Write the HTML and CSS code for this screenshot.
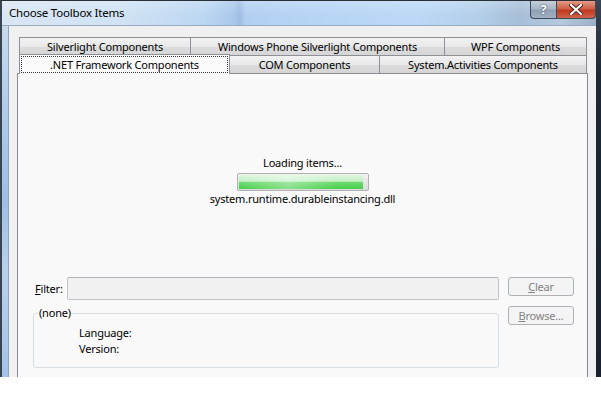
FILE: index.html
```html
<!DOCTYPE html>
<html>
<head>
<meta charset="utf-8">
<link rel="stylesheet" href="styles.css">
</head>
<body>
<div class="shot">
  <div class="dlg">
    <div class="cap">
      <span class="cap-text">Choose Toolbox Items</span>
      <div class="cap-btns">
        <span class="cbtn help">?</span>
        <span class="cbtn closer">
          <svg width="14" height="11" viewBox="0 0 14 11"><path d="M2 1 L12 10 M12 1 L2 10" stroke="#4a1a12" stroke-width="4" stroke-linecap="square"/><path d="M2 1 L12 10 M12 1 L2 10" stroke="#ffffff" stroke-width="2.2" stroke-linecap="square"/></svg>
        </span>
      </div>
    </div>
    <div class="dlg-main">
      <div class="edge-l"></div>
      <div class="client">
        <div class="tabs">
          <div class="tabrow">
            <div class="tab w1">Silverlight Components</div>
            <div class="tab w2">Windows Phone Silverlight Components</div>
            <div class="tab w3">WPF Components</div>
          </div>
          <div class="tabrow">
            <div class="tab selected w4"><span class="focus">.NET Framework Components</span></div>
            <div class="tab w5">COM Components</div>
            <div class="tab w6">System.Activities Components</div>
          </div>
        </div>
        <div class="page">
          <div class="loading">
            <div class="line">Loading items...</div>
            <div class="progress"><div class="fill"></div></div>
            <div class="line">system.runtime.durableinstancing.dll</div>
          </div>
          <div class="lower">
            <div class="leftcol">
              <div class="filter">
                <label class="flabel"><u>F</u>ilter:</label>
                <div class="textbox"></div>
              </div>
              <fieldset class="group">
                <legend>(none)</legend>
                <div class="line info">Language:</div>
                <div class="line info">Version:</div>
              </fieldset>
            </div>
            <div class="rightcol">
              <div class="btn"><u>C</u>lear</div>
              <div class="btn"><u>B</u>rowse...</div>
            </div>
          </div>
        </div>
      </div>
    </div>
  </div>
  <div class="edge-r"></div>
</div>
</body>
</html>
```
FILE: styles.css
```css
* { box-sizing: border-box; }
html, body { margin: 0; padding: 0; background: #ffffff; }
body {
  width: 601px;
  height: 393px;
  overflow: hidden;
  font-family: "Noto Sans", "Open Sans", sans-serif;
  font-size: 11px;
  letter-spacing: -0.2px;
  color: #000;
}
.shot {
  display: flex;
  width: 601px;
  height: 377px;
  overflow: hidden;
}
.dlg {
  width: 596px;
  flex: none;
  display: flex;
  flex-direction: column;
  border-top: 1px solid #2a2f36;
  border-left: 2px solid #3a4450;
  background: #b9d5f1;
}
.edge-r {
  width: 5px;
  flex: none;
  background: linear-gradient(to bottom, #3a4654, #1c2833 20%, #17222c);
}
.cap {
  height: 25px;
  flex: none;
  display: flex;
  align-items: flex-start;
  background: linear-gradient(to bottom, rgba(255,255,255,0.2), rgba(255,255,255,0) 60%), linear-gradient(to right, #d9e6f4 0%, #d0e2f4 20%, #bcd7f2 34%, #a9c8ea 39%, #9dbde2 40%, #b2d0f1 41%, #b5d4f4 50%, #bbd9f6 70%, #b3cfea 80%, #a7bfd8 87%, #b4c9de 94%, #9db1c6 100%);
  border-bottom: 1px solid #9aabc0;
}
.cap-text {
  padding-left: 7px;
  line-height: 24px;
  font-size: 11.5px;
}
.cap-btns {
  margin-left: auto;
  display: flex;
  height: 18px;
}
.cbtn {
  height: 18px;
  display: flex;
  align-items: center;
  justify-content: center;
  border: 1px solid #3d4a5a;
  border-top: none;
}
.help {
  width: 26px;
  border-right: none;
  border-radius: 0 0 0 4px;
  background: linear-gradient(to bottom, #c3cfdc 0%, #a7b5c5 48%, #8e9fb3 52%, #a2b1c3 100%);
  color: #fff;
  font-weight: bold;
  font-size: 12px;
  text-shadow: 0 0 2px #2b3440;
}
.closer {
  width: 40px;
  border-radius: 0 0 4px 0;
  background: linear-gradient(to bottom, #e49c89 0%, #cf5f47 45%, #c13a21 55%, #d0634a 100%);
}
.dlg-main {
  flex: 1;
  display: flex;
  min-height: 0;
}
.edge-l {
  width: 7px;
  flex: none;
  background: linear-gradient(to bottom, #c6daef 0%, #aac8e8 30%, #9fbfe2 50%, #b7d1ec 70%, #a4c3e5 100%);
  border-right: 1px solid #8da3bd;
}
.client {
  flex: 1;
  min-width: 0;
  background: #f0f0f0;
  padding: 11px 8px 0 8px;
  display: flex;
  flex-direction: column;
}
.tabs {
  padding-left: 2px;
  padding-right: 1px;
  display: flex;
  flex-direction: column;
}
.tabrow { display: flex; height: 18px; }
.tab {
  height: 18px;
  flex: none;
  border: 1px solid #8d9096;
  border-bottom: none;
  background: linear-gradient(to bottom, #f2f2f2 0%, #e8e8e8 50%, #dcdcdc 51%, #d6d6d6 100%);
  text-align: center;
  line-height: 17px;
  margin-left: -1px;
  white-space: nowrap;
}
.tab:first-child { margin-left: 0; }
.w1 { width: 172px; }
.w2 { width: 255px; }
.w3 { width: 143px; }
.w4 { width: 211px; }
.w5 { width: 151px; }
.w6 { width: 208px; }
.tab.selected {
  position: relative;
  z-index: 1;
  height: 20px;
  margin-top: -1px;
  margin-bottom: -1px;
  background: #fbfbfb;
  padding: 1px 1px 0 1px;
}
.focus {
  display: block;
  height: 17px;
  border: 1px dotted #333;
  line-height: 15px;
}
.page {
  flex: 1;
  background: #f9f9f9;
  border: 1px solid #898c95;
  border-bottom: none;
  display: flex;
  flex-direction: column;
}
.line { line-height: 16px; height: 16px; }
.loading {
  margin-top: 81px;
  display: flex;
  flex-direction: column;
  align-items: center;
}
.progress {
  margin: 2px 0 0 0;
  width: 132px;
  height: 18px;
  border: 1px solid #b1b1b1;
  border-radius: 2px;
  background: linear-gradient(to bottom, #f2f2f2, #dcdcdc);
  padding: 1px;
}
.fill {
  width: 124px;
  height: 100%;
  background: linear-gradient(to right, rgba(255,255,255,0) 0%, rgba(255,255,255,0.35) 40%, rgba(255,255,255,0) 80%), linear-gradient(to bottom, #dcf7dc 0%, #c4f0c5 45%, #6fd971 52%, #45cf48 100%);
}
.lower {
  margin-top: 70px;
  margin-left: 15px;
  display: flex;
  gap: 9px;
}
.leftcol { width: 466px; display: flex; flex-direction: column; }
.filter { display: flex; align-items: center; height: 23px; }
.flabel { width: 34px; padding-left: 2px; }
.textbox {
  flex: 1;
  height: 23px;
  border: 1px solid #c2c4c8;
  border-top-color: #b4b6ba;
  border-radius: 2px;
  background: #f1f1f1;
}
.group {
  margin: 6px 0 0 0;
  padding: 5px 0 10px 0;
  border: 1px solid #d5dfe5;
  border-radius: 3px;
  height: 62px;
  min-width: 0;
}
.group legend {
  margin-left: 4px;
  padding: 0 1px;
  line-height: 14px;
  height: 14px;
}
.info { padding-left: 45px; }
.rightcol { width: 66px; display: flex; flex-direction: column; gap: 10px; }
.btn {
  height: 19px;
  border: 1px solid #adb2b5;
  border-radius: 3px;
  background: #f4f4f4;
  color: #838383;
  text-align: center;
  line-height: 17px;
}
```
